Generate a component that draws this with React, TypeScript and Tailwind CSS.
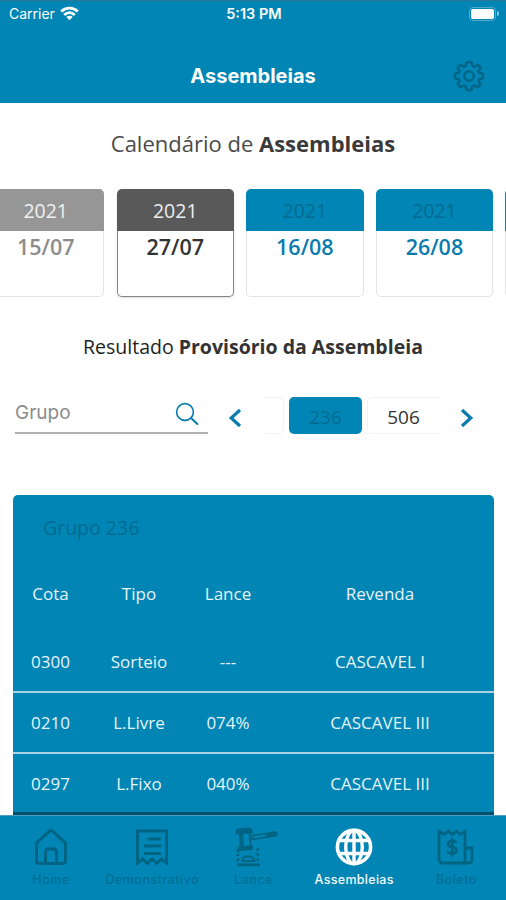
import React, { useState } from 'react';

interface Meeting {
  year: string;
  day: string;
  status: 'past' | 'selected' | 'upcoming';
}

interface ResultRow {
  cota: string;
  tipo: string;
  lance: string;
  revenda: string;
}

interface TabItem {
  label: string;
  labelClass: string;
  icon: React.ReactNode;
}

const meetings: Meeting[] = [
  { year: '2021', day: '15/07', status: 'past' },
  { year: '2021', day: '27/07', status: 'selected' },
  { year: '2021', day: '16/08', status: 'upcoming' },
  { year: '2021', day: '26/08', status: 'upcoming' },
  { year: '', day: '', status: 'upcoming' }
];

const rows: ResultRow[] = [
  { cota: '0300', tipo: 'Sorteio', lance: '---', revenda: 'CASCAVEL I' },
  { cota: '0210', tipo: 'L.Livre', lance: '074%', revenda: 'CASCAVEL III' },
  { cota: '0297', tipo: 'L.Fixo', lance: '040%', revenda: 'CASCAVEL III' }
];

const cardStyles = {
  past: { card: '', head: 'bg-[#969696] text-[#f0f0f0]', body: 'border-[#e4e4e4] text-[#8c8c8c]' },
  selected: { card: 'shadow-sm', head: 'bg-[#595959] text-[#ececec]', body: 'border-[#858585] text-[#333333]' },
  upcoming: { card: '', head: 'bg-[#0085b5] text-[#006b91]', body: 'border-[#e4e4e4] text-[#0a7bae]' }
};

const WifiIcon = () => (
  <svg width="19" height="15" viewBox="0 0 19 15" fill="none" stroke="#fff" strokeWidth="2.8">
    <path d="M1.2 5.4C6 .9 13 .9 17.8 5.4" />
    <path d="M4.2 8.9C7.3 6 11.7 6 14.8 8.9" />
    <path d="M9.5 14.2L6.3 11C8.1 9.4 10.9 9.4 12.7 11Z" fill="#fff" stroke="none" />
  </svg>
);

const GearIcon = () => (
  <svg width="32" height="32" viewBox="0 0 32 32" fill="none" stroke="#006688" strokeWidth="2.5" strokeLinejoin="round">
    <path d="M13.2 2.6Q16 1.2 18.8 2.6L19.4 6L21.4 6.8L24.3 5Q27.2 6.1 27.6 8.6L25.4 10.9L26.2 12.9L29.4 13.4Q30.8 16 29.4 18.8L26.2 19.4L25.4 21.4L27.4 24.2Q26.3 26.8 23.7 27.3L21.2 25.3L19.3 26.1L18.8 29.4Q16 30.8 13.2 29.4L12.7 26.1L10.8 25.3L8 27.3Q5.2 26.3 4.7 23.7L6.7 21.3L5.9 19.3L2.6 18.8Q1.2 16 2.6 13.2L5.9 12.7L6.7 10.8L4.7 8.2Q5.7 5.4 8.3 4.8L10.8 6.8L12.7 6Z" />
    <circle cx="16" cy="16" r="4.8" />
  </svg>
);

const SearchIcon = () => (
  <svg width="24" height="24" viewBox="0 0 24 24" fill="none" stroke="#0a7bae" strokeWidth="1.6" strokeLinecap="round">
    <circle cx="10" cy="10" r="8.4" />
    <path d="M16.3 16.3L22.4 22" strokeWidth="2" />
  </svg>
);

const Chevron = ({ d }: { d: string }) => (
  <svg width="14" height="20" viewBox="0 0 14 20" fill="none" stroke="#0a7bae" strokeWidth="3.2">
    <path d={d} />
  </svg>
);

const HomeIcon = () => (
  <svg width="34" height="38" viewBox="0 0 34 38" fill="none" stroke="#006482" strokeWidth="3" strokeLinejoin="round">
    <path d="M2.5 15L15.5 3.2Q17 2 18.5 3.2L31.5 15V32.5Q31.5 35.5 28.5 35.5H5.5Q2.5 35.5 2.5 32.5Z" />
    <path d="M11.5 35V24.5Q11.5 21 14.5 21H19.5Q22.5 21 22.5 24.5V35" />
  </svg>
);

const ReceiptIcon = () => (
  <svg width="34" height="38" viewBox="0 0 34 38" fill="none" stroke="#006482" strokeWidth="3">
    <path d="M2.5 35V3H31.5V35L26.5 31L21.8 35.4L17 31L12.2 35.4L7.5 31Z" />
    <path d="M12.5 11H26M9 18H26M9 25.5H26" strokeWidth="2.8" />
  </svg>
);

const GavelIcon = () => (
  <svg width="44" height="40" viewBox="0 0 44 40" fill="none" stroke="#006482" strokeWidth="2">
    <path d="M1.5 4L3 2.5L15 1.5L16.5 3V5.5L2 6.5Z" fill="#006482" />
    <path d="M5 7L5.5 20M7.2 7L7.8 20M14.5 6L15.5 19" />
    <path d="M4 20.5L17 19V21.8L4.5 23.2Z" fill="#006482" />
    <path d="M17 8.8L39.5 5Q42.5 5 42 8.2L34 9.6L17 12.6Z" strokeWidth="1.6" />
    <path d="M32 7.2L41 6L40.5 8L32 9Z" />
    <path d="M1.5 22.5L4 25M1.5 28H4.5M1.5 34.5L4.5 31.5M24 20.5L21.5 24M24.5 27.5H20.5M24 34L21.5 31.5" />
    <path d="M7 35Q7.5 29.5 11 29.5H15Q19 29.5 19.5 35M6 34H20" strokeWidth="2.2" />
    <path d="M2 37.8H25" strokeWidth="2.8" />
  </svg>
);

const GlobeIcon = () => (
  <svg width="38" height="38" viewBox="0 0 38 38" fill="none" stroke="#fff" strokeWidth="3.6">
    <circle cx="19" cy="19" r="16.6" />
    <ellipse cx="19" cy="19" rx="8.3" ry="16.5" strokeWidth="3.4" />
    <path d="M19 2V36M4 12.5H34M4 25.5H34" strokeWidth="3.4" />
  </svg>
);

const BillIcon = () => (
  <svg width="38" height="38" viewBox="0 0 38 38" fill="none" stroke="#006482" strokeWidth="2.8" strokeLinejoin="round">
    <path d="M3 3L8 6.5L12.5 3L16.5 6.5L20.5 3L24.5 6.5L29 3V35H7Q3 35 3 31Z" />
    <path d="M29 20H36V31Q36 35 32 35H28" />
    <path d="M20.5 15Q19.5 13 16 13Q12 13 12 16Q12 18.5 16 19Q20.5 19.5 20.5 22.5Q20.5 25.5 16.2 25.5Q12.2 25.5 11.5 23M16.2 10V28.5" strokeWidth="2.6" />
  </svg>
);

const tabs: TabItem[] = [
  { label: 'Home', labelClass: 'tracking-[0.6px] pl-px', icon: <HomeIcon /> },
  { label: 'Demonstrativo', labelClass: 'tracking-[0.5px] pl-px', icon: <ReceiptIcon /> },
  { label: 'Lance', labelClass: 'tracking-[0.5px] pl-px', icon: <GavelIcon /> },
  { label: 'Assembleias', labelClass: 'tracking-[0.3px]', icon: <GlobeIcon /> },
  { label: 'Boleto', labelClass: 'tracking-[0.5px] pl-[2px]', icon: <BillIcon /> }
];

const MeetingCard = ({ meeting }: { meeting: Meeting }) => {
  const styles = cardStyles[meeting.status];
  return (
    <div className={`w-[117.4px] shrink-0 rounded-[5px] text-center ${styles.card}`}>
      <div className={`h-[42px] rounded-t-[5px] text-[19.5px] leading-[44px] ${styles.head}`}>{meeting.year}</div>
      <div className={`h-[66px] rounded-b-[5px] border border-t-0 text-[21.5px] leading-8 font-semibold ${styles.body}`}>
        {meeting.day}
      </div>
    </div>
  );
};

export default function App() {
  const [activeTab, setActiveTab] = useState('Assembleias');

  return (
    <div className="flex h-[900px] w-[506px] flex-col overflow-hidden bg-white font-['Open_Sans','Noto_Sans',sans-serif]">
      <header className="h-[103px] shrink-0 border-t border-[#2a7797] bg-[#0085b5] font-[Inter,sans-serif] text-white">
        <div className="grid h-[26px] grid-cols-3 items-center pr-[7px] pb-px pl-[9px]">
          <div className="flex items-center gap-[5px] text-[14px]">
            <span>Carrier</span>
            <WifiIcon />
          </div>
          <span className="text-center text-[14.5px] font-semibold whitespace-nowrap">5:13 PM</span>
          <div className="flex items-center justify-end gap-px">
            <div className="h-[14px] w-[27px] rounded-[4px] border border-[#4fabcd] p-px">
              <div className="h-full rounded-[2px] bg-white" />
            </div>
            <div className="h-[5px] w-[2px] rounded-r bg-[#7fc2da]" />
          </div>
        </div>
        <div className="grid h-[76px] grid-cols-[1fr_auto_1fr] items-center pt-[22px] pr-[21px] pl-[21px]">
          <span />
          <h1 className="text-[20px] leading-7 font-bold">Assembleias</h1>
          <button className="justify-self-end" aria-label="Configurações">
            <GearIcon />
          </button>
        </div>
      </header>

      <main className="flex min-h-0 flex-1 flex-col">
        <h2 className="mt-[24px] text-center text-[22px] leading-8 whitespace-nowrap text-[#4a4a4a]">
          Calendário de <b className="text-[#3a3a3a]">Assembleias</b>
        </h2>

        <div className="mt-[30px] -ml-[13px] flex shrink-0 gap-[12.2px]">
          {meetings.map((meeting, i) => (
            <MeetingCard key={i} meeting={meeting} />
          ))}
        </div>

        <h3 className="mt-[36px] text-center text-[19.5px] leading-7 whitespace-nowrap text-[#222222]">
          Resultado <b className="text-[#333333]">Provisório da Assembleia</b>
        </h3>

        <div className="mt-[36px] flex h-[37px] shrink-0 items-start pl-[15px]">
          <div className="flex h-[37px] w-[193px] items-center justify-between border-b-2 border-[#b0b0b0] pr-[9px] pb-[2px]">
            <span className="font-[Inter,sans-serif] text-[19px] text-[#8c8c8c]">Grupo</span>
            <SearchIcon />
          </div>
          <button className="mt-[11px] ml-[20px]" aria-label="Anterior">
            <Chevron d="M12 2L3.2 10L12 18" />
          </button>
          <div className="ml-[21px] flex w-[178px] gap-[5px] overflow-hidden text-[19px]">
            <div className="h-[37px] w-[21px] shrink-0 rounded-r-[5px] border border-l-0 border-[#f1f1f1]" />
            <div className="h-[37px] w-[73px] shrink-0 rounded-[5px] bg-[#0085b5] text-center leading-[41px] text-[#006b91]">236</div>
            <div className="h-[37px] w-[74px] shrink-0 rounded-l-[5px] border border-r-0 border-[#f1f1f1] pr-[2px] text-center leading-[39px] text-[#333333]">506</div>
          </div>
          <button className="mt-[11px] ml-[19px]" aria-label="Próximo">
            <Chevron d="M2 2L10.8 10L2 18" />
          </button>
        </div>

        <section className="mt-[61px] mr-[12px] ml-[13px] flex flex-1 flex-col rounded-t-[5px] border-b-[3px] border-[#00506f] bg-[#0085b5] text-[#e6f3f9]">
          <div className="h-[64px] pl-[30px] text-[19.5px] leading-[65px] text-[#006b91]">Grupo 236</div>
          <div className="grid h-[73px] grid-cols-[75px_102px_76px_1fr] items-center pb-[3px] text-center text-[17px]">
            <span>Cota</span>
            <span>Tipo</span>
            <span>Lance</span>
            <span>Revenda</span>
          </div>
          {rows.map((row, i) => (
            <div
              key={row.cota}
              className={`grid grid-cols-[75px_102px_76px_1fr] items-center text-center text-[17px] ${
                i < rows.length - 1 ? 'h-[61px] border-b-2 border-[#a9d3e5]' : 'flex-1 pt-[2px]'
              }`}
            >
              <span>{row.cota}</span>
              <span>{row.tipo}</span>
              <span>{row.lance}</span>
              <span>{row.revenda}</span>
            </div>
          ))}
        </section>
      </main>

      <nav className="grid h-[85px] shrink-0 grid-cols-5 border-t border-[#4d9fbd] bg-[#0085b5] font-[Inter,sans-serif]">
        {tabs.map(tab => (
          <button
            key={tab.label}
            className="flex flex-col items-center pt-[10.5px]"
            onClick={() => setActiveTab(tab.label)}
          >
            <span className={`flex h-[40px] items-center ${tab.label === 'Lance' ? 'pl-[8px]' : ''}`}>{tab.icon}</span>
            <span
              className={`mt-[5px] text-[12.5px] leading-4 font-medium whitespace-nowrap ${tab.labelClass} ${
                tab.label === activeTab ? 'text-[#f2f9fc]' : 'text-[#006f96]'
              }`}
            >
              {tab.label}
            </span>
          </button>
        ))}
      </nav>
    </div>
  );
}
